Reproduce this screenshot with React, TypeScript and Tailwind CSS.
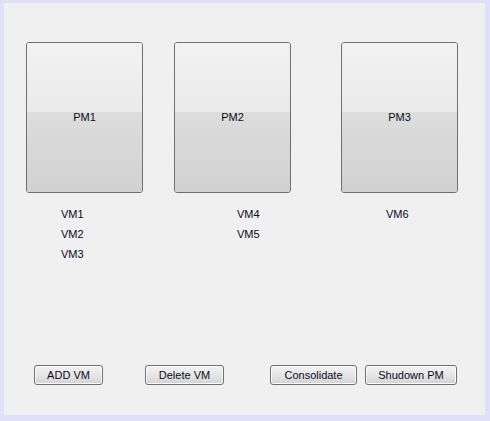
import React from 'react';

const pms = [
  { name: 'PM1', vms: ['VM1', 'VM2', 'VM3'], gap: 'ml-[22px]', vmIndent: 'pl-[35px]' },
  { name: 'PM2', vms: ['VM4', 'VM5'], gap: 'ml-[31px]', vmIndent: 'pl-[63px]' },
  { name: 'PM3', vms: ['VM6'], gap: 'ml-[50px]', vmIndent: 'pl-[45px]' },
];

const buttons = [
  { label: 'ADD VM', width: 'w-[69px]', gap: 'ml-[30px]' },
  { label: 'Delete VM', width: 'w-[79px]', gap: 'ml-[42px]' },
  { label: 'Consolidate', width: 'w-[87px]', gap: 'ml-[46px]' },
  { label: 'Shudown PM', width: 'w-[92px]', gap: 'ml-[8px]' },
];

function PmBox({ name }: { name: string }) {
  return (
    <div className="w-[117px] h-[151px] border border-[#707070] rounded-[3px] flex flex-col overflow-hidden">
      <div className="h-[69px] bg-gradient-to-b from-[#f2f2f2] to-[#eaeaea]" />
      <div className="flex-1 bg-gradient-to-b from-[#dddddd] to-[#d1d1d1] flex justify-center">
        <span className="-mt-[1px] leading-[13px]">{name}</span>
      </div>
    </div>
  );
}

export default function App() {
  return (
    <div
      className="w-[490px] h-[421px] bg-[#e0e0fa] pt-[3px] pl-[4px] pr-[5px] pb-[6px] text-[11px] text-[#0a0a1a]"
      style={{ fontFamily: '"Liberation Sans", Arial, sans-serif' }}
    >
      <div className="w-full h-full bg-[#f0f0f0] flex flex-col">
        <div className="flex mt-[39px]">
          {pms.map((pm) => (
            <div key={pm.name} className={`flex flex-col ${pm.gap}`}>
              <PmBox name={pm.name} />
              <div className={`mt-[11px] flex flex-col ${pm.vmIndent}`}>
                {pm.vms.map((vm) => (
                  <span key={vm} className="leading-[20px]">{vm}</span>
                ))}
              </div>
            </div>
          ))}
        </div>

        <div className="flex mt-auto mb-[30px]">
          {buttons.map((b) => (
            <button
              key={b.label}
              className={`${b.width} ${b.gap} h-[20px] border border-[#707070] rounded-[3px] bg-gradient-to-b from-[#f2f2f2] via-[#e6e6e6] to-[#d3d3d3] shadow-[inset_0_0_0_1px_#fcfcfc] leading-[18px] text-center`}
            >
              {b.label}
            </button>
          ))}
        </div>
      </div>
    </div>
  );
}
